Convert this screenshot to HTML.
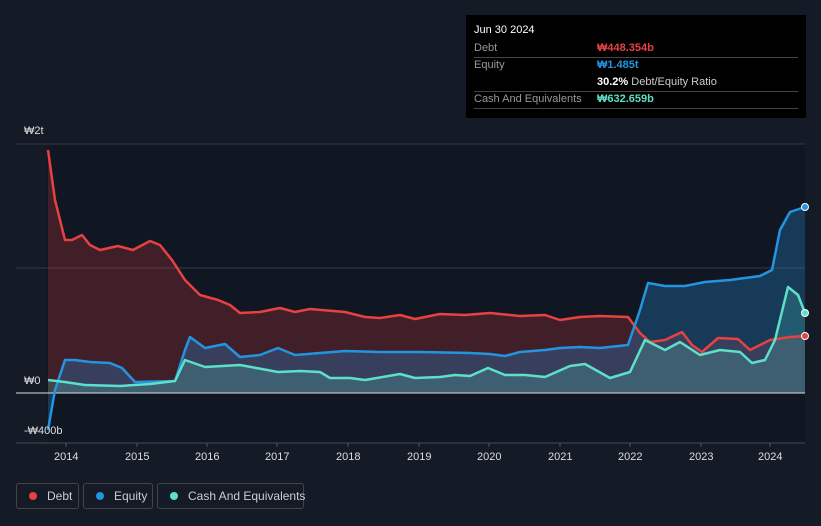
<!DOCTYPE html><html><head><style>
body{margin:0;background:#151b26;font-family:"Liberation Sans",sans-serif;width:821px;height:526px;overflow:hidden;position:relative}
.tt{position:absolute;left:466px;top:15px;width:340px;height:103px;background:#000;color:#fff;font-size:11px}
.tt .r{position:absolute;left:8px;right:8px;border-bottom:1px solid #444;height:17px;line-height:17px;color:#999}
.tt .v{position:absolute;left:123px}
.lg{position:absolute;top:483px;height:26px;border:1px solid #444;border-radius:3px;color:#ccc;font-size:12px;line-height:24px;box-sizing:border-box;white-space:nowrap}
.lg i{display:inline-block;width:8px;height:8px;border-radius:50%;margin:0 10px 0 12px}
.ax{position:absolute;color:#ddd;font-size:11px}
</style></head><body>
<svg width="821" height="526" style="position:absolute;left:0;top:0">
<rect x="47" y="144" width="758" height="299" fill="#111722"/>
<line x1="16" y1="144" x2="805" y2="144" stroke="#333a46"/>
<line x1="16" y1="268" x2="805" y2="268" stroke="#333a46"/>
<line x1="16" y1="443" x2="805" y2="443" stroke="#444a55"/>
<polygon fill="rgba(232,65,66,0.22)" points="48,393 48,150 55,200 65,240 72,240 82,235 90,245 100,250 118,246 133,250 150,241 160,245 172,260 185,280 200,295 218,300 230,305 240,313 260,312 280,308 295,312 310,309 345,312 365,317 380,318 400,315 415,319 440,314 465,315 490,313 520,316 545,315 560,320 580,317 600,316 628,317 640,333 650,342 665,340 682,332 692,345 702,352 718,338 738,339 750,350 770,340 790,337 805,336 805,393"/>
<polygon fill="rgba(40,140,220,0.3)" points="48,393 48,430 55,390 65,360 75,360 90,362 110,363 122,368 135,382 175,381 185,350 190,337 205,348 225,344 240,357 260,355 278,348 295,355 320,353 345,351 380,352 420,352 470,353 490,354 505,356 520,352 545,350 560,348 580,347 600,348 628,345 640,310 648,283 665,286 685,286 705,282 730,280 760,276 772,270 780,230 790,212 805,207 805,393"/>
<polygon fill="rgba(90,220,200,0.2)" points="48,393 48,380 65,382 85,385 120,386 150,384 175,381 185,360 205,367 240,365 278,372 300,371 320,372 330,378 350,378 365,380 400,374 415,378 440,377 455,375 470,376 488,368 505,375 525,375 545,377 570,366 585,364 610,378 630,372 645,340 665,350 680,342 700,355 720,350 740,352 752,363 765,360 775,340 788,287 798,295 805,313 805,393"/>
<line x1="16" y1="393" x2="805" y2="393" stroke="#ddd"/>
<g fill="none" stroke-width="2.5" stroke-linejoin="round">
<polyline stroke="#e84142" points="48,150 55,200 65,240 72,240 82,235 90,245 100,250 118,246 133,250 150,241 160,245 172,260 185,280 200,295 218,300 230,305 240,313 260,312 280,308 295,312 310,309 345,312 365,317 380,318 400,315 415,319 440,314 465,315 490,313 520,316 545,315 560,320 580,317 600,316 628,317 640,333 650,342 665,340 682,332 692,345 702,352 718,338 738,339 750,350 770,340 790,337 805,336"/>
<polyline stroke="#2394e0" points="48,430 55,390 65,360 75,360 90,362 110,363 122,368 135,382 175,381 185,350 190,337 205,348 225,344 240,357 260,355 278,348 295,355 320,353 345,351 380,352 420,352 470,353 490,354 505,356 520,352 545,350 560,348 580,347 600,348 628,345 640,310 648,283 665,286 685,286 705,282 730,280 760,276 772,270 780,230 790,212 805,207"/>
<polyline stroke="#5de0c8" points="48,380 65,382 85,385 120,386 150,384 175,381 185,360 205,367 240,365 278,372 300,371 320,372 330,378 350,378 365,380 400,374 415,378 440,377 455,375 470,376 488,368 505,375 525,375 545,377 570,366 585,364 610,378 630,372 645,340 665,350 680,342 700,355 720,350 740,352 752,363 765,360 775,340 788,287 798,295 805,313"/>
</g>
<circle cx="805" cy="336" r="3.5" fill="#e84142" stroke="#fff"/>
<circle cx="805" cy="207" r="3.5" fill="#2394e0" stroke="#fff"/>
<circle cx="805" cy="313" r="3.5" fill="#5de0c8" stroke="#fff"/>
<g stroke="#555"><line x1="66" y1="443" x2="66" y2="447"/><line x1="137" y1="443" x2="137" y2="447"/><line x1="207" y1="443" x2="207" y2="447"/><line x1="277" y1="443" x2="277" y2="447"/><line x1="348" y1="443" x2="348" y2="447"/><line x1="419" y1="443" x2="419" y2="447"/><line x1="489" y1="443" x2="489" y2="447"/><line x1="560" y1="443" x2="560" y2="447"/><line x1="630" y1="443" x2="630" y2="447"/><line x1="701" y1="443" x2="701" y2="447"/><line x1="770" y1="443" x2="770" y2="447"/></g>
</svg>
<div class="ax" style="left:24px;top:125px">₩2t</div>
<div class="ax" style="left:24px;top:375px">₩0</div>
<div class="ax" style="left:24px;top:425px">-₩400b</div>
<div class="ax" style="left:54px;top:451px">2014</div><div class="ax" style="left:125px;top:451px">2015</div><div class="ax" style="left:195px;top:451px">2016</div><div class="ax" style="left:265px;top:451px">2017</div><div class="ax" style="left:336px;top:451px">2018</div><div class="ax" style="left:407px;top:451px">2019</div><div class="ax" style="left:477px;top:451px">2020</div><div class="ax" style="left:548px;top:451px">2021</div><div class="ax" style="left:618px;top:451px">2022</div><div class="ax" style="left:689px;top:451px">2023</div><div class="ax" style="left:758px;top:451px">2024</div>
<div class="tt">
<div style="position:absolute;left:8px;top:9px">Jun 30 2024</div>
<div class="r" style="top:25px">Debt<span class="v" style="color:#e84142;font-weight:bold">₩448.354b</span></div>
<div class="r" style="top:42px;border:none">Equity<span class="v" style="color:#2394e0;font-weight:bold">₩1.485t</span></div>
<div class="r" style="top:59px"><span class="v" style="color:#ccc"><b style="color:#fff">30.2%</b> Debt/Equity Ratio</span></div>
<div class="r" style="top:76px">Cash And Equivalents<span class="v" style="color:#5de0c8;font-weight:bold">₩632.659b</span></div>
</div>
<div class="lg" style="left:16px;width:63px"><i style="background:#e84142"></i>Debt</div>
<div class="lg" style="left:83px;width:70px"><i style="background:#2394e0"></i>Equity</div>
<div class="lg" style="left:157px;width:147px"><i style="background:#5de0c8"></i>Cash And Equivalents</div>
</body></html>
